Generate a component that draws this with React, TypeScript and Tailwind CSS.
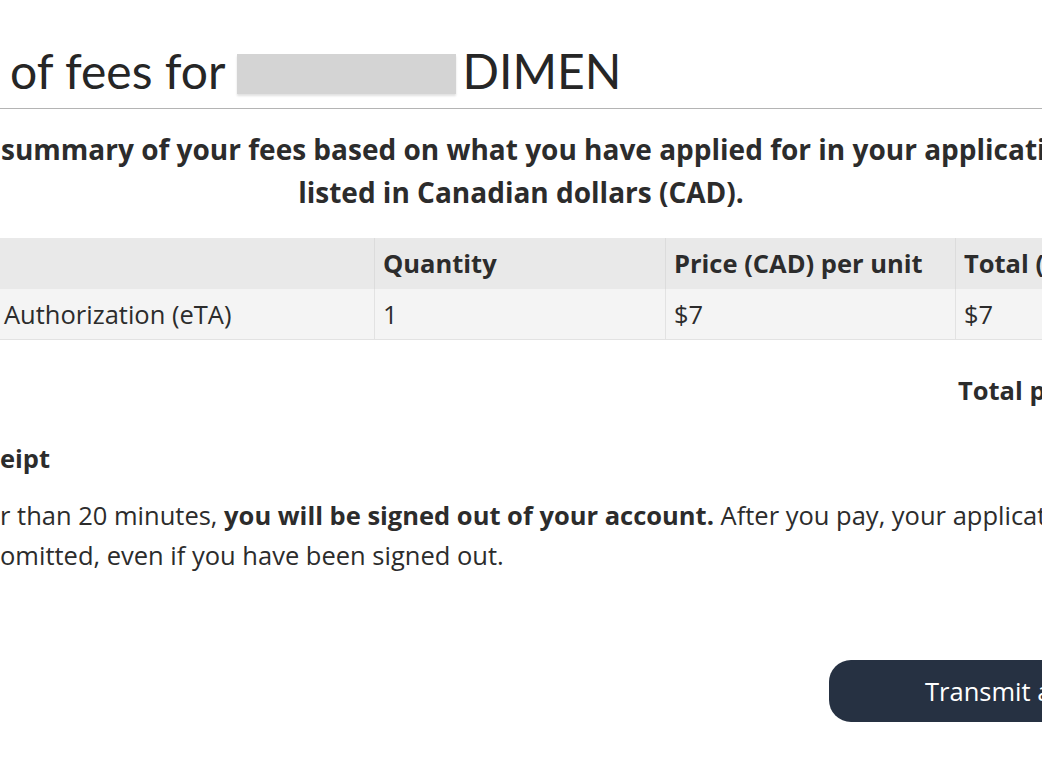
export default function App() {
  return (
    <div className="w-[1042px] h-[782px] overflow-hidden bg-white text-[#2c2c2c] font-['Open_Sans',sans-serif]">
      {/* page heading */}
      <div className="pt-[42px] pl-[10px] flex items-center whitespace-nowrap">
        <h1 className="font-['Lato',sans-serif] text-[48px] leading-[58px] text-[#262626] flex items-center">
          <span>of fees for</span>
          <span className="inline-block w-[219px] h-[40px] bg-[#d4d4d4] ml-[12px] mr-[6px] mt-[6px] shadow-[0_2px_2px_rgba(0,0,0,0.12)]" />
          <span>DIMEN</span>
        </h1>
      </div>
      <div className="mt-[8px] h-px bg-[#b4b4b4]" />

      {/* intro */}
      <div className="mt-[19px] font-bold text-[28px] leading-[43px]">
        <p className="whitespace-nowrap pl-[1px]">
          summary of your fees based on what you have applied for in your application
        </p>
        <p className="text-center">listed in Canadian dollars (CAD).</p>
      </div>

      {/* fees table */}
      <div className="mt-[24px] w-[1250px] text-[25.5px]">
        <div className="grid grid-cols-[375px_291px_290px_1fr] bg-[#e9e9e9] h-[51px] font-bold">
          <div className="border-r border-[#dcdcdc]" />
          <div className="px-[8px] flex items-center border-r border-[#dcdcdc]">Quantity</div>
          <div className="px-[8px] flex items-center border-r border-[#dcdcdc] whitespace-nowrap">Price (CAD) per unit</div>
          <div className="px-[8px] flex items-center whitespace-nowrap">Total (CAD)</div>
        </div>
        <div className="grid grid-cols-[375px_291px_290px_1fr] bg-[#f4f4f4] h-[51px] border-b border-[#e2e2e2]">
          <div className="pl-[4px] flex items-center border-r border-[#e2e2e2] whitespace-nowrap">Authorization (eTA)</div>
          <div className="px-[8px] flex items-center border-r border-[#e2e2e2]">1</div>
          <div className="px-[8px] flex items-center border-r border-[#e2e2e2]">$7</div>
          <div className="px-[8px] flex items-center">$7</div>
        </div>
      </div>

      {/* total */}
      <div className="mt-[34px] pl-[958px] whitespace-nowrap font-bold text-[25.5px] leading-[32px]">
        Total payment: $7
      </div>

      {/* receipt */}
      <h2 className="mt-[36px] font-bold text-[25.5px] leading-[32px]">eipt</h2>
      <div className="mt-[21px] text-[25.5px] leading-[40px] whitespace-nowrap">
        <p>
          r than 20 minutes, <strong>you will be signed out of your account.</strong> After you pay, your application will be
        </p>
        <p>omitted, even if you have been signed out.</p>
      </div>

      {/* action */}
      <div className="mt-[85px] pl-[829px] w-[1300px]">
        <button className="h-[62px] w-[420px] rounded-[22px] bg-[#263142] text-white text-[25.5px] pl-[96px] text-left whitespace-nowrap">
          Transmit and pay
        </button>
      </div>
    </div>
  )
}
